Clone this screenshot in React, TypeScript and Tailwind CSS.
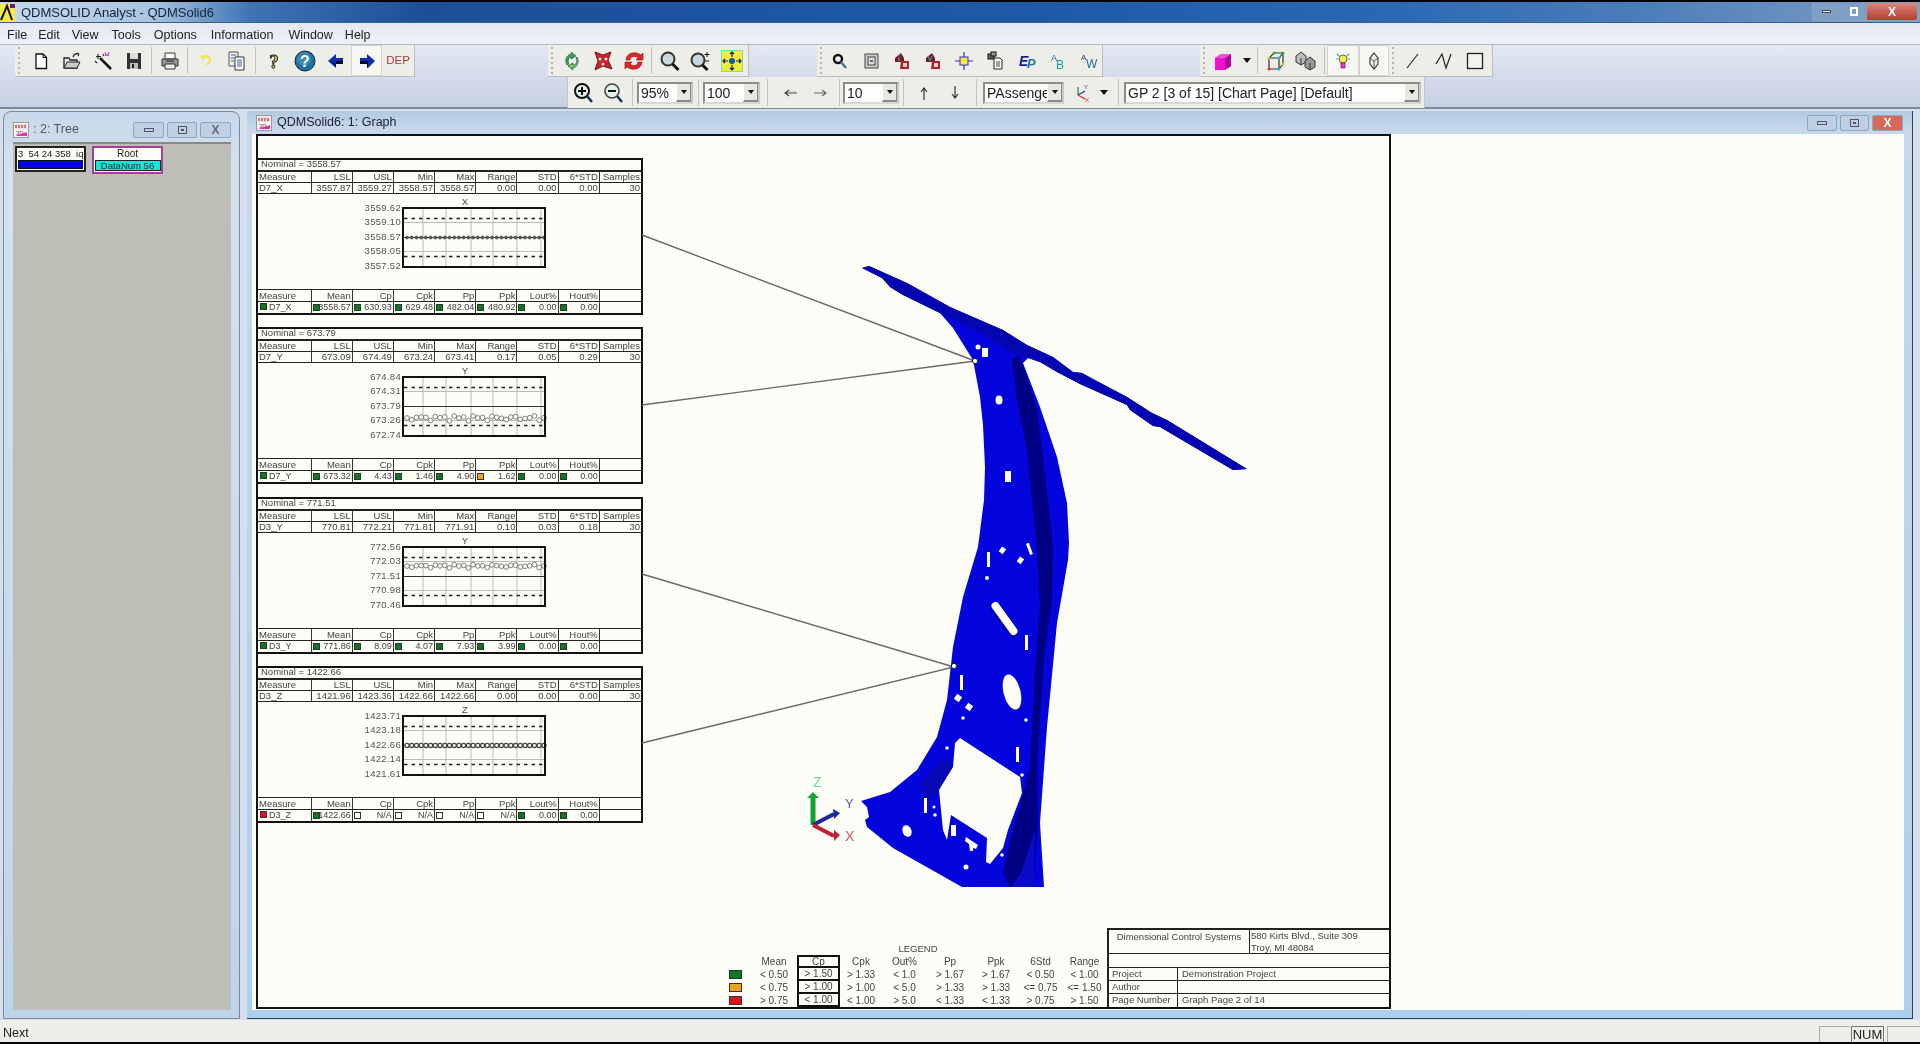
import React from "react";

const I = ({ children, w = 22 }: { children: React.ReactNode; w?: number }) => (
  <svg width={w} height={22} viewBox={`0 0 ${w} 22`} fill="none">{children}</svg>
);

const icons: Record<string, React.ReactNode> = {
  newDoc: <I><path d="M6 4h7l3.500 3.500V18.500H6z" fill="#fff" stroke="#111" strokeWidth="1.300" /><path d="M13 4v3.500h3.500" stroke="#111" /></I>,
  open: <I><path d="M3 18V8h5l1 2h7v8z" fill="#eee" stroke="#222" strokeWidth="1.3" /><path d="M3 18l3-6h13l-3 6z" fill="#ccc" stroke="#222" /><path d="M12 7c1-3 3-4 6-3M18 4l-2-1M18 4l-1 2" stroke="#222" strokeWidth="1.2" /></I>,
  wand: <I><path d="M8 8l11 11" stroke="#111" strokeWidth="2.5" /><path d="M6 4v5M4 6.500h5M3 11l2 2M11 4l1 2" stroke="#222" strokeWidth="1.1" /><path d="M13 2l1 4 1-2 1 2 1-4" stroke="#c040d0" strokeWidth="1" /></I>,
  save: <I><path d="M4 3h14v16H4z" fill="#333" /><path d="M7 3h8v6H7z" fill="#ddd" /><path d="M7 13h8v6H7z" fill="#bbb" /><path d="M9 14h2v4H9z" fill="#222" /></I>,
  print: <I><path d="M6 3h10v6H6z" fill="#fff" stroke="#333" /><path d="M3 9h16v7H3z" fill="#999" stroke="#333" /><path d="M6 14h10v5H6z" fill="#eee" stroke="#333" /><path d="M7 11h8" stroke="#222" /></I>,
  undo: <I><path d="M8 8c3-3 7-2 7 2 0 3-2 4-3 5" stroke="#f4e25a" strokeWidth="2.4" /><path d="M5 6l5-1-1 6z" fill="#f4e25a" /></I>,
  copy: <I><path d="M3 2h9v14H3z" fill="#eee" stroke="#555" /><path d="M9 7h9v13H9z" fill="#fff" stroke="#333" /><path d="M5 5h5M5 8h3M5 11h3M11 10h5M11 12h5M11 14h5M11 16h5" stroke="#4060a0" /></I>,
  help: <I><text x="11" y="18" textAnchor="middle" fontSize="19" fontFamily="Liberation Serif" fontWeight="700" fill="#d8d050" stroke="#222" strokeWidth="0.9">?</text></I>,
  info: <I><circle cx="11" cy="11" r="10" fill="#1d6f9f" stroke="#124" /><circle cx="10" cy="9" r="7" fill="#56a4cc" opacity=".5" /><text x="11" y="17" textAnchor="middle" fontSize="16" fontFamily="Liberation Sans" fontWeight="700" fill="#fff">?</text></I>,
  left: <I><path d="M18 8h-7V4L3 11l8 7v-4h7z" fill="#0a2cb0" /><path d="M18 11h-7v3l-6-3 6 5v-2h7z" fill="#050530" /></I>,
  right: <I><path d="M4 8h7V4l8 7-8 7v-4H4z" fill="#0a2cb0" /><path d="M4 11h8v7l7-7-8 7v-4H4z" fill="#050530" /></I>,
  cycle: <I><path d="M6 15C3 10 6 4 11 4l-1-2 5 4-5 3V7C8 7 6 10 8 14z" fill="#34b04a" stroke="#135" strokeWidth=".6" /><path d="M16 7c3 5 0 11-5 11l1 2-5-4 5-3v2c3 0 5-3 3-7z" fill="#6fcf50" stroke="#135" strokeWidth=".6" /></I>,
  star: <I><path d="M3 2l8 3 8-3-3 8 4 9-9-3-8 4 3-9z" fill="#c8242c" stroke="#801018" /><circle cx="8" cy="9" r="1.5" fill="#eee" /><circle cx="14" cy="9" r="1.500" fill="#eee" /><circle cx="11" cy="14" r="1.5" fill="#eee" /></I>,
  redCycle: <I><path d="M3 10C3 4 11 0 18 5l2-2v7h-7l2-2C11 5 7 7 7 10z" fill="#e0242c" stroke="#801018" strokeWidth=".6" /><path d="M19 12c0 6-8 10-15 5l-2 2v-7h7l-2 2c4 3 8 1 8-2z" fill="#e0242c" stroke="#801018" strokeWidth=".6" /></I>,
  mag: <I><circle cx="9" cy="9" r="6.500" fill="#c8d8dc" stroke="#333" strokeWidth="2" /><path d="M13.500 14l6 6" stroke="#111" strokeWidth="3" /></I>,
  magPM: <I w={24}><circle cx="9" cy="10" r="6.500" fill="#c8d8dc" stroke="#333" strokeWidth="2" /><path d="M13.500 15l5 5" stroke="#111" strokeWidth="3" /><path d="M18 2v5M15.500 4.500h5M16 11h4" stroke="#111" /></I>,
  fit: <I><rect x="0" y="0" width="22" height="22" fill="#f4ec3c" stroke="#50d8d0" strokeWidth="1.5" /><circle cx="11" cy="11" r="3" fill="#0a5ab0" /><path d="M11 2v5M9 4l2-2 2 2M11 20v-5M9 18l2 2 2-2M2 11h5M4 9l-2 2 2 2M20 11h-5M18 9l2 2-2 2" stroke="#0a2060" strokeWidth="1.2" /></I>,
  findSm: <I><circle cx="9" cy="9" r="4" fill="#eee" stroke="#111" strokeWidth="2.4" /><path d="M12 12l5 6" stroke="#5070a0" strokeWidth="2.500" /></I>,
  squares: <I><rect x="5" y="4" width="13" height="14" fill="#ccc" stroke="#444" /><rect x="8" y="7" width="7" height="8" fill="#ddd" stroke="#444" /><rect x="10" y="10" width="3" height="2" fill="#666" /></I>,
  infoRed: <I><path d="M4 8l6-5 3 5v4H4z" fill="#801820" /><path d="M10 11h8v8h-9z" fill="#b02030" /><path d="M12 13h4v4h-4z" fill="#f0d0d0" /><text x="8" y="11" textAnchor="middle" fontSize="9" fontWeight="700" fill="#20a0b0" fontFamily="Liberation Serif">i</text></I>,
  vRed: <I><path d="M4 8l6-5 3 5v4H4z" fill="#801820" /><path d="M10 11h8v8h-9z" fill="#b02030" /><path d="M12 13h4v4h-4z" fill="#f0d0d0" /><text x="8" y="11" textAnchor="middle" fontSize="8" fontWeight="700" fill="#20a0b0" fontFamily="Liberation Sans">V</text></I>,
  cross: <I><path d="M11 2v18M2 11h18" stroke="#3030d0" strokeWidth="1.2" /><rect x="7" y="7" width="8" height="8" fill="#f4ec3c" stroke="#3030d0" /></I>,
  docs: <I><rect x="4" y="4" width="6" height="5" fill="#666" stroke="#111" /><path d="M10 8h6l2 2v9h-8z" fill="#fff" stroke="#222" /><path d="M12 12h4M12 14h4M12 16h4" stroke="#444" /><rect x="7" y="2" width="5" height="4" fill="#999" stroke="#111" /></I>,
  ep: <I><text x="4" y="16" fontSize="14" fontStyle="italic" fontWeight="700" fill="#17208a" fontFamily="Liberation Sans">E</text><text x="12" y="18" fontSize="13" fontStyle="italic" fontWeight="700" fill="#1878a8" fontFamily="Liberation Sans">P</text></I>,
  ab: <I><text x="5" y="11" fontSize="9" fill="#1a60a0" fontFamily="Liberation Sans">A</text><text x="10" y="19" fontSize="12" fill="#1aa0a0" fontFamily="Liberation Sans">B</text></I>,
  aw: <I><text x="4" y="10" fontSize="8" fill="#333" fontFamily="Liberation Sans">A</text><text x="9" y="18" fontSize="12" fill="#1a70a0" fontFamily="Liberation Sans">W</text></I>,
  cube: <I><path d="M3 8l6-4h10v12l-6 4H3z" fill="#f010d0" /><path d="M13 8l6-4v12l-6 4z" fill="#b008a0" /><path d="M3 8l6-4h10l-6 4z" fill="#f050e0" /></I>,
  wire: <I><path d="M5 8h10v11H5zM5 8l5-5h9v11l-4 5M15 8l4-5" stroke="#333" strokeWidth="1.200" /><circle cx="5" cy="19" r="1.5" fill="#e03030" /><circle cx="19" cy="3" r="1.500" fill="#30b040" /><circle cx="15" cy="8" r="1.5" fill="#30b0e0" /><circle cx="19" cy="14" r="1.500" fill="#e0c030" /><circle cx="10" cy="3" r="1.5" fill="#30b040" /><circle cx="5" cy="8" r="1.500" fill="#e0c030" /><circle cx="15" cy="19" r="1.500" fill="#30b0e0" /></I>,
  cubes: <I w={24}><path d="M7 2l5 4v6l-5 3-5-3V6z" fill="#bbb" stroke="#333" /><path d="M16 7l5 4v6l-5 3-5-3v-6z" fill="#999" stroke="#333" /><path d="M7 8v7M16 13v7" stroke="#333" /></I>,
  bulb: <I><circle cx="11" cy="9" r="4" fill="#f4f050" stroke="#665" /><path d="M9 13h4v5H9z" fill="#e040e0" stroke="#604" strokeWidth=".6" /><path d="M5 4l2 2M17 4l-2 2M4 9h2M18 9h-2" stroke="#30b0b0" strokeWidth="1.100" /></I>,
  cubeOut: <I><path d="M11 3l4 5v6l-4 5-4-5V8z" fill="#eee" stroke="#333" strokeWidth="1.100" /><path d="M7 8l4 3 4-3M11 11v8" stroke="#333" strokeWidth=".8" /></I>,
  line: <I><path d="M5 18L16 4" stroke="#222" strokeWidth="1.100" /></I>,
  zig: <I><path d="M3 14L9 4l4 14 5-14" stroke="#222" strokeWidth="1.200" /></I>,
  rect: <I><rect x="3.500" y="3.500" width="15" height="15" stroke="#222" strokeWidth="1.300" fill="#f4f4ee" /></I>,
  zoomIn: <I><circle cx="10" cy="9" r="7" fill="#e0f0e8" stroke="#111" strokeWidth="2" /><path d="M6 9h8M10 5v8" stroke="#111" strokeWidth="2" /><path d="M15 14l5 6" stroke="#103060" strokeWidth="2.500" /></I>,
  zoomOut: <I><circle cx="10" cy="9" r="7" fill="#e0f0e8" stroke="#444" strokeWidth="1.600" /><path d="M6 9h8" stroke="#111" strokeWidth="2" /><path d="M15 14l5 6" stroke="#103060" strokeWidth="2.500" /></I>,
  aLeft: <I><path d="M18 11H6M10 8l-4 3 4 3" stroke="#444" strokeWidth="1.100" /><path d="M17 10H9" stroke="#aaa" /></I>,
  aRight: <I><path d="M4 11h12M12 8l4 3-4 3" stroke="#666" strokeWidth="1.100" /></I>,
  aUp: <I><path d="M11 18V6M8 10l3-4 3 4" stroke="#333" strokeWidth="1.200" /></I>,
  aDown: <I><path d="M11 4v12M8 12l3 4 3-4" stroke="#333" strokeWidth="1.200" /></I>,
  axes: <I><path d="M9 13V5" stroke="#30a050" strokeWidth="1.400" /><path d="M9 13l7-4" stroke="#3040a0" strokeWidth="1.400" /><path d="M9 13l7 4" stroke="#e03040" strokeWidth="1.400" /><text x="15" y="7" fontSize="6" fill="#3040a0" fontFamily="Liberation Sans">Y</text><text x="16" y="20" fontSize="6" fill="#e03040" fontFamily="Liberation Sans">X</text></I>,
};

const Tool = ({ name, w = "w-[31px]", active = false }: { name: string; w?: string; active?: boolean }) => (
  <div className={`${w} h-full flex items-center justify-center shrink-0 ${active ? "bg-[#f6f6f2] border border-[#d5d5cf]" : ""}`}>{icons[name]}</div>
);

const Grip = ({ w }: { w: string }) => (
  <div className={`${w} h-full shrink-0 flex flex-col justify-center items-start pl-[3px] gap-[3px]`}>
    {[0, 1, 2, 3, 4, 5].map((i) => <div key={i} className="w-[2px] h-[2px] bg-[#b4b4ac]" />)}
  </div>
);

const Sep = ({ w = "w-[5px]" }: { w?: string }) => (
  <div className={`${w} h-full shrink-0 flex justify-center py-[2px]`}><div className="w-[1px] h-full bg-[#c4c4bc]" /></div>
);

const Arrow = ({ w = "w-[16px]" }: { w?: string }) => (
  <div className={`${w} h-full shrink-0 flex items-center justify-center`}>
    <div className="w-0 h-0 border-x-[4px] border-x-transparent border-t-[5px] border-t-[#111]" />
  </div>
);

const Combo = ({ w, text }: { w: string; text: string }) => (
  <div className={`${w} h-[22px] shrink-0 flex bg-[#fdfdfb] border-2 border-t-[#8c8c88] border-l-[#8c8c88] border-r-[#c8c8c4] border-b-[#d8d8d4] overflow-hidden`}>
    <div className="flex-1 min-w-0 pl-[2px] text-[14px] leading-[18px] text-[#222] overflow-hidden whitespace-nowrap">{text}</div>
    <div className="w-[15px] shrink-0 bg-[#e8e8e2] border-l border-[#fff] border-b-2 border-b-[#888] border-r border-r-[#888] flex items-center justify-center">
      <div className="w-0 h-0 border-x-[3.5px] border-x-transparent border-t-[4px] border-t-[#111]" />
    </div>
  </div>
);

const Bar = ({ children, cls }: { children: React.ReactNode; cls: string }) => (
  <div className={`${cls} shrink-0 flex bg-[#eeeee8] border-r border-b border-[#b8bcc0]`}>{children}</div>
);

const Cell = ({ children, first = false, sw }: { children?: React.ReactNode; first?: boolean; sw?: string }) => (
  <div className={`relative border-r border-[#333] overflow-hidden whitespace-nowrap leading-[11px] ${first ? "text-left pl-[1px]" : "text-right pr-[1px]"} last:border-r-0`}>
    {sw && <span className={`inline-block w-[7px] h-[7px] border border-[#333] ${first ? "mr-[2px] ml-[1px]" : "absolute left-[1px] top-[2px]"} ${sw}`} />}
    {children}
  </div>
);

const rowCls = "grid grid-cols-[53.5px_repeat(8,41.2px)] text-[9.5px] text-[#444] border-b border-[#222]";
const G = "bg-[#0b7a1e]";
const O = "bg-[#f0a020]";
const R = "bg-[#e81020]";
const E = "bg-[#fbfdf6]";

type PanelProps = {
  nominal: string;
  name: string;
  top: string[];
  bot: [string, string][];
  firstSw: string;
  axis: string;
  labels: string[];
  dataY: number;
  amp: number;
  heavy?: boolean;
};

const Chart = ({ axis, labels, dataY, amp, heavy }: Pick<PanelProps, "axis" | "labels" | "dataY" | "amp" | "heavy">) => {
  const xs = Array.from({ length: 30 }, (_, i) => 149 + i * 4.72);
  const flat = amp === 0;
  return (
    <svg width="383" height="96" viewBox="0 0 383 96" className="block">
      <text x="207" y="11" textAnchor="middle" fontSize="9.500" fill="#444" fontFamily="Liberation Sans">{axis}</text>
      {labels.map((l, i) => (
        <text key={i} x="143" y={16.500 + i * 14.6} textAnchor="end" fontSize="9.500" fill="#555" letterSpacing=".3" fontFamily="Liberation Sans">{l}</text>
      ))}
      {[165, 188, 213, 235, 259, 283].map((x) => <path key={x} d={`M${x} 14V72`} stroke="#bbb" />)}
      {[28.500, 57.500].map((y) => <path key={y} d={`M146 ${y}H286`} stroke="#bbb" />)}
      <path d="M146 24.500H286M146 62.500H286" stroke="#222" strokeWidth="1.300" strokeDasharray="3.500 4" />
      <path d="M146 43.500H286" stroke="#333" strokeWidth="1.200" />
      {xs.map((x, i) => (
        <circle
          key={i}
          cx={x}
          cy={dataY + amp * Math.sin(i * 2.3) * Math.cos(i * 0.7)}
          r={heavy ? 2.1 : flat ? 1.6 : 2.4}
          fill={flat && !heavy ? "#555" : "#fbfdf6"}
          stroke="#444"
          strokeWidth={heavy ? 1.300 : flat ? 0.6 : 0.65}
        />
      ))}
      <rect x="145" y="14" width="142" height="59" stroke="#111" strokeWidth="2" fill="none" />
    </svg>
  );
};

const Panel = (p: PanelProps) => (
  <div className="w-[385px] h-[157px] border-y-2 border-r-2 border-[#111] shrink-0">
    <div className="h-[12px] border-b-2 border-[#222] text-[9.5px] leading-[8px] text-[#444] pl-[3px]">Nominal = {p.nominal}</div>
    <div className={`h-[11px] ${rowCls} [&>div]:leading-[9px]`}>
      {["Measure", "LSL", "USL", "Min", "Max", "Range", "STD", "6*STD", "Samples"].map((h, i) => <Cell key={h} first={i === 0}>{h}</Cell>)}
    </div>
    <div className={`h-[11px] ${rowCls} [&>div]:leading-[9px]`}>
      <Cell first>{p.name}</Cell>
      {p.top.map((v, i) => <Cell key={i}>{v}</Cell>)}
    </div>
    <div className="h-[96px] border-b border-[#222]"><Chart {...p} /></div>
    <div className={`h-[12px] ${rowCls}`}>
      {["Measure", "Mean", "Cp", "Cpk", "Pp", "Ppk", "Lout%", "Hout%", ""].map((h, i) => <Cell key={i} first={i === 0}>{h}</Cell>)}
    </div>
    <div className="h-[11px] grid grid-cols-[53.5px_repeat(8,41.2px)] text-[9px] text-[#444]">
      <Cell first sw={p.firstSw}>{p.name}</Cell>
      {p.bot.map(([v, s], i) => <Cell key={i} sw={s}>{v}</Cell>)}
      <Cell />
    </div>
  </div>
);

const panels: PanelProps[] = [
  { nominal: "3558.57", name: "D7_X", top: ["3557.87", "3559.27", "3558.57", "3558.57", "0.00", "0.00", "0.00", "30"], bot: [["3558.57", G], ["630.93", G], ["629.48", G], ["482.04", G], ["480.92", G], ["0.00", G], ["0.00", G]], firstSw: G, axis: "X", labels: ["3559.62", "3559.10", "3558.57", "3558.05", "3557.52"], dataY: 43.500, amp: 0 },
  { nominal: "673.79", name: "D7_Y", top: ["673.09", "674.49", "673.24", "673.41", "0.17", "0.05", "0.29", "30"], bot: [["673.32", G], ["4.43", G], ["1.46", G], ["4.90", G], ["1.62", O], ["0.00", G], ["0.00", G]], firstSw: G, axis: "Y", labels: ["674.84", "674.31", "673.79", "673.26", "672.74"], dataY: 55, amp: 3 },
  { nominal: "771.51", name: "D3_Y", top: ["770.81", "772.21", "771.81", "771.91", "0.10", "0.03", "0.18", "30"], bot: [["771.86", G], ["8.09", G], ["4.07", G], ["7.93", G], ["3.99", G], ["0.00", G], ["0.00", G]], firstSw: G, axis: "Y", labels: ["772.56", "772.03", "771.51", "770.98", "770.46"], dataY: 33, amp: 2 },
  { nominal: "1422.66", name: "D3_Z", top: ["1421.96", "1423.36", "1422.66", "1422.66", "0.00", "0.00", "0.00", "30"], bot: [["1422.66", G], ["N/A", E], ["N/A", E], ["N/A", E], ["N/A", E], ["0.00", G], ["0.00", G]], firstSw: R, axis: "Z", labels: ["1423.71", "1423.18", "1422.66", "1422.14", "1421.61"], dataY: 43.500, amp: 0, heavy: true },
];

const Part = () => (
  <svg width="1135" height="875" viewBox="256 134 1135 875" className="absolute -left-[2px] -top-[2px] pointer-events-none">
    <path d="M642 235L975 361L642 405M642 574L954 667L642 743" stroke="#6a6a60" strokeWidth="1.400" fill="none" />
    <path fill="#0404dc" d="M862 268L869 266L907 283L950 307L1003 330L1027 345L1053 357L1073 372L1082 373L1093 379L1127 397L1152 413L1167 420L1247 469L1233 470L1160 427L1153 426L1130 410L1127 405L1080 384L1057 372L1040 362L1028 358L1023 363L1040 407L1057 457L1067 503L1069 543L1068 560L1057 623L1047 727L1040 823L1044 887L962 887L893 848L867 827L865 820L869 817L867 807L861 801L890 792L917 770L937 737L947 700L953 647L963 597L978 547L984 500L985 467L983 425L980 397L973 360L953 328L940 313L903 295L890 287L882 278Z" />
    <path fill="#0606b0" d="M862 268L869 266L907 283L950 307L1003 330L1027 345L1053 357L1073 372L1082 373L1093 379L1127 397L1152 413L1167 420L1247 469L1233 470L1160 427L1153 426L1130 410L1127 405L1080 384L1057 372L1040 362L1028 358L1010 352L990 338L950 318L903 295L890 287L882 278Z" />
    <path fill="#000084" d="M1012 360L1017 400L1027 450L1037 547L1040 607L1036 657L1030 767L1020 807L1010 840L1003 873L1010 887L1033 887L1038 823L1037 767L1044 657L1052 600L1053 547L1043 457L1037 410L1023 365L1018 354Z" />
    <path fill="#0a0ac8" d="M1022 870L1035 830L1034 887L1012 887Z" />
    <path fill="#0808b4" d="M921 782L945 758L953 767L941 790L925 802Z" />
    <g fill="#fbfdf6">
      <path d="M960 738L1020 777L1022 793L1008 830L1003 848L990 864L986 862L987 838L951 815L947 840L943 830L939 790L953 767L955 743Z" />
      <circle cx="978" cy="347" r="2.500" /><rect x="982" y="348" width="6" height="9" /><ellipse cx="999" cy="400" rx="3.500" ry="4.500" /><rect x="1005" y="471" width="6" height="11" />
      <ellipse cx="1012" cy="692" rx="8.500" ry="18" transform="rotate(-14 1012 692)" />
      <rect x="987" y="552" width="3" height="15" /><rect x="1000" y="547" width="5" height="6" transform="rotate(35 1002 550)" /><rect x="1018" y="557" width="5" height="6" transform="rotate(35 1020 560)" /><rect x="1028" y="543" width="3" height="12" transform="rotate(-20 1029 549)" />
      <circle cx="987" cy="578" r="2" /><rect x="1025" y="635" width="3" height="15" /><rect x="960" y="675" width="3" height="15" />
      <rect x="955" y="695" width="6" height="6" transform="rotate(35 958 698)" /><rect x="966" y="704" width="6" height="6" transform="rotate(35 969 707)" />
      <circle cx="963" cy="718" r="1.800" /><circle cx="1026" cy="720" r="1.800" /><circle cx="947" cy="748" r="1.800" /><rect x="1016" y="747" width="3" height="15" /><circle cx="1022" cy="775" r="1.800" />
      <rect x="924" y="798" width="3" height="15" /><circle cx="934" cy="807" r="1.500" /><circle cx="935" cy="815" r="1.800" /><ellipse cx="907" cy="831" rx="4.500" ry="6" transform="rotate(-20 907 831)" /><circle cx="966" cy="867" r="2.500" /><circle cx="1002" cy="855" r="1.800" />
      <rect x="951" y="825" width="5" height="11" /><path d="M966 837L978 845L976 849L973 848L973 851L970 851L969 844L965 841Z" />
    </g>
    <path d="M995 607L1013 632" stroke="#0000a0" strokeWidth="10" strokeLinecap="round" />
    <path d="M995.500 606L1013.500 631" stroke="#fbfdf6" strokeWidth="8" strokeLinecap="round" />
    <circle cx="975" cy="361" r="2.600" fill="#fff" stroke="#222" />
    <circle cx="954" cy="666" r="2.600" fill="#fff" stroke="#222" />
    <path d="M813 825V798" stroke="#12a030" strokeWidth="5" /><path d="M807 798L813 792L819 798Z" fill="#14a838" />
    <path d="M813 825L834 814" stroke="#1a2aa0" strokeWidth="4" /><path d="M833 809L840 813L834 819Z" fill="#1a2aa0" />
    <path d="M813 825L834 836" stroke="#c02030" strokeWidth="4" /><path d="M834 830L840 835L834 841Z" fill="#c02030" />
    <text x="813" y="787" fontSize="14" fill="#70d890" fontFamily="Liberation Sans">Z</text>
    <text x="845" y="808" fontSize="13" fill="#5060a8" fontFamily="Liberation Sans">Y</text>
    <text x="845" y="841" fontSize="14" fill="#d05060" fontFamily="Liberation Sans">X</text>
  </svg>
);

const legendRows = [
  ["< 0.50", "> 1.50", "> 1.33", "< 1.0", "> 1.67", "> 1.67", "< 0.50", "< 1.00"],
  ["< 0.75", "> 1.00", "> 1.00", "< 5.0", "> 1.33", "> 1.33", "<= 0.75", "<= 1.50"],
  ["> 0.75", "< 1.00", "< 1.00", "> 5.0", "< 1.33", "< 1.33", "> 0.75", "> 1.50"],
];
const legendHead = ["Mean", "Cp", "Cpk", "Out%", "Pp", "Ppk", "6Std", "Range"];
const legendGrid = "grid grid-cols-[22px_46px_43px_42px_45px_46px_46px_43px_45px] h-[13px] items-center text-center text-[10px] leading-[13px] text-[#444]";

const Legend = () => (
  <div className="w-[378px] shrink-0">
    <div className="h-[13px] text-center text-[9.5px] leading-[13px] text-[#444]">LEGEND</div>
    <div className={legendGrid}>
      <div />
      {legendHead.map((h, i) => <div key={h} className={i === 1 ? "h-[13px] border-2 border-[#111] flex items-center justify-center" : ""}>{h}</div>)}
    </div>
    {legendRows.map((r, ri) => (
      <div key={ri} className={legendGrid}>
        <div className={`w-[13px] h-[9px] border border-[#333] ${[G, O, R][ri]}`} />
        {r.map((v, i) => <div key={i} className={i === 1 ? "h-[13px] border-x-2 border-b-2 border-[#111] flex items-center justify-center" : "whitespace-nowrap"}>{v}</div>)}
      </div>
    ))}
  </div>
);

const TitleBlock = () => (
  <div className="w-[282px] shrink-0 border-l-2 border-t-2 border-[#222] text-[9.5px] text-[#444]">
    <div className="h-[24px] flex border-b border-[#222]">
      <div className="w-[141px] text-center leading-[13px] border-r border-[#222]">Dimensional Control Systems</div>
      <div className="flex-1 pl-[1px] leading-[12px] whitespace-nowrap">580 Kirts Blvd., Suite 309<br />Troy, MI 48084</div>
    </div>
    <div className="h-[14px] border-b border-[#222]" />
    {[["Project", "Demonstration Project"], ["Author", ""], ["Page Number", "Graph Page 2 of 14"]].map(([a, b], i) => (
      <div key={a} className={`h-[13px] flex leading-[12px] ${i < 2 ? "border-b border-[#222]" : ""}`}>
        <div className="w-[69px] pl-[3px] border-r border-[#222]">{a}</div>
        <div className="flex-1 pl-[4px]">{b}</div>
      </div>
    ))}
  </div>
);

const DocIcon = () => (
  <svg width="16" height="16" viewBox="0 0 16 16" className="shrink-0">
    <rect x="0.500" y="0.500" width="15" height="15" fill="#f4f4f4" stroke="#999" />
    <path d="M2 2h12v5H2z" fill="#e8dcd8" />
    <path d="M3 3v3M6 3v3M9 3v3M12 3v3" stroke="#c04040" strokeWidth="1.200" />
    <path d="M2 14l12-4v4z" fill="#e030c0" />
    <text x="3" y="13" fontSize="6" fill="#c03030" fontFamily="Liberation Sans">3D</text>
  </svg>
);

const WinBtn = ({ w, kind, red = false }: { w: string; kind: "min" | "max" | "close"; red?: boolean }) => (
  <div className={`${w} h-[16px] rounded-[2px] border border-[#8ea6c0] flex items-center justify-center ${red ? "bg-[#d8685c]" : "bg-[#bfd0e2]"}`}>
    {kind === "min" && <div className="w-[10px] h-[4px] border border-[#556]" />}
    {kind === "max" && <div className="w-[9px] h-[8px] border border-[#556] flex items-center justify-center"><div className="w-[3px] h-[2px] bg-[#556]" /></div>}
    {kind === "close" && <span className={`text-[12px] font-bold leading-none ${red ? "text-white" : "text-[#667]"}`}>X</span>}
  </div>
);

export default function App() {
  return (
    <div className="w-[1920px] h-[1044px] flex flex-col overflow-hidden font-['Liberation_Sans',sans-serif] blur-[0.4px] bg-[#d5deec]">
      <div className="h-[23px] shrink-0 border-t-2 border-black border-b border-b-[#3a5f88] bg-[linear-gradient(90deg,#c4d8ea_0%,#a8c4e0_8%,#3f74b4_13%,#1c4f98_22%,#1e5aa8_55%,#2a68b4_72%,#4a7cb8_85%,#7f9fc4_100%)] flex items-center relative">
        <svg width="17" height="20" viewBox="0 0 17 20" className="shrink-0">
          <rect x="0" y="2" width="15" height="18" fill="#f4e84c" />
          <path d="M1 18L7 4l5 14" stroke="#111" strokeWidth="2" fill="none" />
          <rect x="10" y="2" width="5" height="4" fill="#701870" />
        </svg>
        <div className="ml-[4px] pt-[1px] text-[13px] text-[#12233a] whitespace-nowrap">QDMSOLID Analyst - QDMSolid6</div>
        <div className="ml-auto mr-[2px] flex h-[18px] rounded-b-[3px] border border-t-0 border-[#8ea6c0] overflow-hidden">
          <div className="w-[27px] bg-[#7f9fc4] flex items-center justify-center"><div className="w-[9px] h-[3px] bg-white border border-[#445]" /></div>
          <div className="w-[27px] bg-[#7f9fc4] flex items-center justify-center"><div className="w-[8px] h-[9px] border-2 border-white" /></div>
          <div className="w-[50px] bg-[linear-gradient(180deg,#d88a80,#b83a2c)] flex items-center justify-center text-white font-bold text-[12px] leading-none">X</div>
        </div>
      </div>

      <div className="h-[22px] shrink-0 pt-[3px] bg-[linear-gradient(180deg,#e2e8f2,#edf1f7)] border-b border-[#b4b8c0] flex items-center text-[12.5px] text-[#222]">
        <span className="ml-[7px]">File</span>
        <span className="ml-[11px]">Edit</span>
        <span className="ml-[12px]">View</span>
        <span className="ml-[13px]">Tools</span>
        <span className="ml-[13px]">Options</span>
        <span className="ml-[14px]">Information</span>
        <span className="ml-[15px]">Window</span>
        <span className="ml-[12px]">Help</span>
      </div>

      <div className="h-[64px] shrink-0 bg-[linear-gradient(180deg,#e2e8f3,#c6d1e5)] border-b-2 border-[#7f8994] flex flex-col">
        <div className="h-[32px] shrink-0 flex pl-[15px]">
          <Bar cls="w-[400px] h-[32px]">
            <Grip w="w-[10px]" />
            <Tool name="newDoc" /><Tool name="open" /><Tool name="wand" /><Tool name="save" />
            <Sep />
            <Tool name="print" />
            <Sep />
            <Tool name="undo" /><Tool name="copy" />
            <Sep w="w-[6px]" />
            <Tool name="help" /><Tool name="info" /><Tool name="left" /><Tool name="right" active />
            <div className="flex-1 flex items-center justify-center text-[11.5px] text-[#a23a3a]">DEP</div>
          </Bar>
          <Bar cls="ml-[133px] w-[201px] h-[32px]">
            <Grip w="w-[8px]" />
            <Tool name="cycle" /><Tool name="star" /><Tool name="redCycle" />
            <Sep />
            <Tool name="mag" /><Tool name="magPM" /><Tool name="fit" />
          </Bar>
          <Bar cls="ml-[68px] w-[286px] h-[32px]">
            <Grip w="w-[7px]" />
            <Tool name="findSm" /><Tool name="squares" /><Tool name="infoRed" /><Tool name="vRed" /><Tool name="cross" /><Tool name="docs" /><Tool name="ep" /><Tool name="ab" /><Tool name="aw" />
          </Bar>
          <Bar cls="ml-[97px] w-[293px] h-[32px]">
            <Grip w="w-[8px]" />
            <Tool name="cube" w="w-[30px]" />
            <Arrow w="w-[17px]" />
            <Sep />
            <Tool name="wire" w="w-[29px]" /><Tool name="cubes" w="w-[33px]" />
            <Sep />
            <Tool name="bulb" w="w-[32px]" active /><Tool name="cubeOut" w="w-[30px]" active />
            <Grip w="w-[8px]" />
            <Tool name="line" /><Tool name="zig" /><Tool name="rect" />
          </Bar>
        </div>
        <div className="ml-[567px] w-[858px] h-[31px] shrink-0 flex items-center bg-[#eeeee8] border-l border-r border-[#c4c8cc]">
          <Tool name="zoomIn" w="w-[30px]" /><Tool name="zoomOut" w="w-[30px]" />
          <Sep w="w-[9px]" /><Combo w="w-[56px]" text="95%" />
          <Sep w="w-[10px]" /><Combo w="w-[57px]" text="100" />
          <Sep w="w-[14px]" /><Tool name="aLeft" /><Tool name="aRight" />
          <Sep w="w-[7px]" /><Combo w="w-[56px]" text="10" />
          <Sep w="w-[9px]" /><Tool name="aUp" /><Tool name="aDown" />
          <Sep w="w-[13px]" /><Combo w="w-[81px]" text="PAssenger" />
          <Tool name="axes" w="w-[32px]" /><Arrow />
          <Sep w="w-[12px]" /><Combo w="w-[297px]" text="GP 2 [3 of 15] [Chart Page] [Default]" />
        </div>
      </div>

      <div className="flex-1 min-h-0 flex pl-[3px] pt-[2px]">
        <div className="w-[237px] h-[908px] shrink-0 rounded-t-[8px] border border-[#7e8a96] bg-[linear-gradient(180deg,#c8d8ea,#d4e2f0_6%,#bcd4ec)] flex flex-col">
          <div className="h-[30px] shrink-0 pt-[5px] flex items-center pl-[9px] text-[12.5px] text-[#556]">
            <DocIcon />
            <span className="ml-[4px]">: 2: Tree</span>
            <div className="ml-auto mr-[8px] flex gap-[3px]">
              <WinBtn w="w-[31px]" kind="min" /><WinBtn w="w-[30px]" kind="max" /><WinBtn w="w-[31px]" kind="close" />
            </div>
          </div>
          <div className="flex-1 ml-[9px] mr-[8px] mb-[8px] bg-[#bebeb6] border-t-2 border-[#8a8a84] pl-[2px] pt-[2px] flex items-start gap-[6px]">
            <div className="w-[71px] h-[26px] border-2 border-[#222] bg-[#fdfdf8] flex flex-col shrink-0">
              <div className="h-[12px] text-[9.5px] leading-[11px] text-[#222] whitespace-nowrap overflow-hidden pl-[1px]">3&nbsp; 54 24 358&nbsp; iqe</div>
              <div className="mx-[1px] flex-1 mb-[1px] bg-[#0404e0] border border-[#111]" />
            </div>
            <div className="w-[71px] h-[28px] border-2 border-[#a040a0] bg-[#fdfdf8] flex flex-col items-center shrink-0">
              <div className="h-[12px] text-[10px] leading-[12px] text-[#222]">Root</div>
              <div className="w-[66px] h-[11px] bg-[#10e8d8] border border-[#222] text-[9.5px] leading-[9px] text-[#223] text-center whitespace-nowrap">DataNum 56</div>
            </div>
          </div>
        </div>

        <div className="ml-[7px] w-[1666px] h-[908px] shrink-0 border-r border-b border-[#30404c] bg-[linear-gradient(180deg,#b4cae0,#c6d8ea_2%,#acd0ec)] flex flex-col">
          <div className="h-[23px] shrink-0 flex items-center pl-[9px] text-[12.5px] text-[#223]">
            <DocIcon />
            <span className="ml-[5px]">QDMSolid6: 1: Graph</span>
            <div className="ml-auto mr-[9px] flex gap-[3px]">
              <WinBtn w="w-[30px]" kind="min" /><WinBtn w="w-[29px]" kind="max" /><WinBtn w="w-[31px]" kind="close" red />
            </div>
          </div>
          <div className="ml-[5px] mr-[8px] h-[876px] bg-[#fbfdf6] pl-[4px]">
            <div className="relative w-[1135px] h-[875px] border-2 border-[#111] flex flex-col">
              <div className="pt-[22px] flex flex-col gap-[12.3px]">
                {panels.map((p) => <Panel key={p.name} {...p} />)}
              </div>
              <div className="mt-auto ml-[471px] flex items-end">
                <Legend />
                <TitleBlock />
              </div>
              <Part />
            </div>
          </div>
        </div>
      </div>

      <div className="h-[24px] shrink-0 bg-[#eeeeea] border-b-2 border-black flex items-end text-[12.5px] text-[#222]">
        <span className="ml-[3px] mb-[1px] leading-[16px]">Next</span>
        <div className="ml-auto w-[31px] h-[16px] border-l border-t border-[#aaa]" />
        <div className="ml-[1px] w-[33px] h-[16px] border border-b-0 border-[#777] text-center leading-[15px] text-[13px]">NUM</div>
        <div className="ml-[3px] w-[33px] h-[16px] border-l border-t border-[#aaa]" />
      </div>
    </div>
  );
}
